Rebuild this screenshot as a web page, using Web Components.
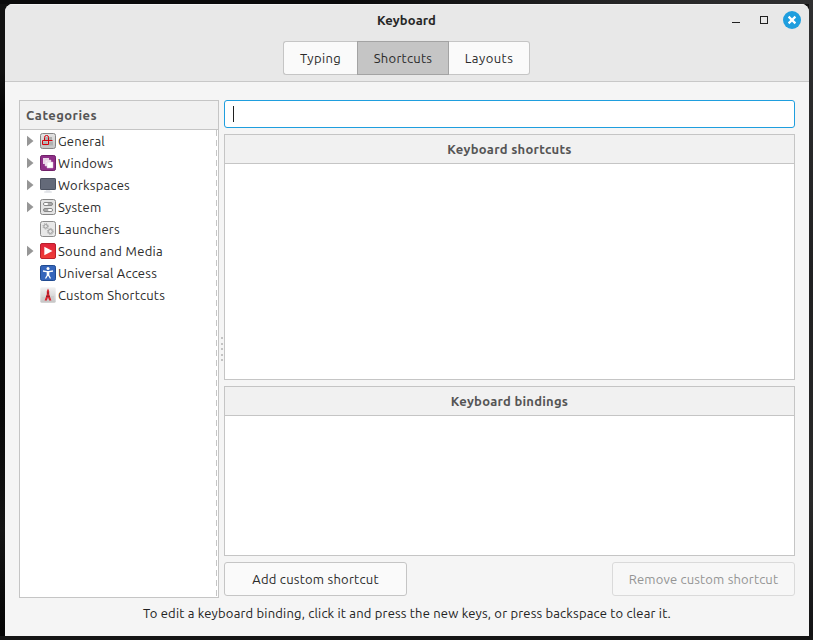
<!DOCTYPE html>
<html lang="en">
<head>
<meta charset="utf-8">
<title>Keyboard</title>
<style>
html{height:100%}
body{margin:0;height:640px;overflow:hidden;box-sizing:border-box;padding:4px 4px 4px 5px;
font:13px/18px Ubuntu,"Noto Sans","Open Sans",sans-serif;color:#2b2b2b;
background:
linear-gradient(#0000 0 4px,#0000 4px 636px,#151515 636px),
linear-gradient(90deg,#0a0a0b 0 340px,#252526 620px,#303031 813px) 0 0/100% 4px no-repeat,
linear-gradient(#111 0 70px,#030303 110px,#090909 420px,#151515 530px,#030303) 0 0/5px 100% no-repeat,
linear-gradient(#303031,#202021 280px,#292929 500px,#121213) 100% 0/4px 100% no-repeat,#111}
</style>
</head>
<body>
<keyboard-window></keyboard-window>
<script>
const define = (name, html, init) => customElements.define(name, class extends HTMLElement {
  constructor(){ super(); this.attachShadow({mode:'open'}).innerHTML = html; }
  connectedCallback(){ if(init) init(this); }
});

// A text run whose tracking is adjusted to its nominal width.
define('text-run', `<style>:host{display:inline-block;white-space:nowrap}span{display:inline-block}</style><span></span>`, el => {
  const span = el.shadowRoot.querySelector('span');
  const text = el.getAttribute('text'), width = +el.getAttribute('width');
  span.textContent = text;
  const natural = span.getBoundingClientRect().width;
  if(natural) span.style.letterSpacing = (width - natural) / text.length + 'px';
});

define('title-bar', `<style>
:host{display:grid;grid-template-columns:1fr auto 1fr;height:32px;align-items:center;font-weight:600;color:#262626;letter-spacing:0}
text-run{grid-column:2;padding-right:1px}
.controls{justify-self:end;display:flex;padding-right:4px;align-items:center}
svg{display:block}
</style><text-run text="Keyboard" width="59"></text-run>
<div class="controls"><svg width="78" height="20" viewBox="0 0 78 20">
<path d="M5 12.5h8" stroke="#202020" fill="none"/><rect x="33.5" y="6.5" width="7" height="7" stroke="#202020" fill="none"/>
<circle cx="65" cy="10" r="9" fill="#1f9ede"/><path d="M61.6 6.6l6.8 6.8M68.4 6.6l-6.8 6.8" stroke="#fff" stroke-width="2.2"/></svg></div>`);

define('tab-button', `<style>
:host{display:flex;align-items:center;justify-content:center;box-sizing:border-box;height:34px;background:#fafafa;border:1px solid #c5c5c5;color:#2b2b2b}
:host([first]){width:74px;border-right:0;border-radius:3px 0 0 3px}
:host([active]){width:92px;background:#c5c5c5;border-color:#a3a3a3}
:host([last]){width:81px;border-left:0;border-radius:0 3px 3px 0}
</style><slot></slot>`);

define('push-button', `<style>
:host{display:flex;align-items:center;justify-content:center;box-sizing:border-box;width:183px;height:34px;background:#fafafa;border:1px solid #c5c5c5;border-radius:3px;color:#2b2b2b}
:host([disabled]){background:#f7f7f7;border-color:#dadada;color:#949494}
</style><slot></slot>`);

define('list-panel', `<style>
:host{display:flex;flex-direction:column;box-sizing:border-box;border:1px solid #c5c5c5;background:#fff}
header{box-sizing:border-box;height:29px;flex:none;display:flex;align-items:center;justify-content:center;background:#f1f1f1;border-bottom:1px solid #c5c5c5;font-weight:700;color:#555}
:host([side]) header{justify-content:flex-start;padding-left:6px}
.body{flex:1;min-height:0}
:host([side]) .body{margin-right:1px;background:repeating-linear-gradient(#c5c5c5 0 6px,#fff 6px 10px) 100% 0/1px 100% no-repeat}
</style><header><slot name="heading"></slot></header><div class="body"><slot></slot></div>`);

const icons = {
general:`<defs><linearGradient id="g" x2="0" y2="1"><stop stop-color="#e4e4e4"/><stop offset="1" stop-color="#c4c4c4"/></linearGradient></defs><rect x=".5" y=".5" width="15" height="15" rx="2" fill="url(#g)" stroke="#858585"/><path d="M5 4h7v4H5zM3 8.5h4.5v4H3zM8.5 8.5H13v4H8.5z" fill="#b0b0b0"/><path d="M4.5 7.5V4.5q0-2 2-2H7q1.5 0 1.5 2v3M2.5 7.5H12.5M2.5 7.5v4h6v-4" fill="none" stroke="#d4000c"/>`,
windows:`<rect x=".5" y=".5" width="15" height="15" rx="1.7" fill="#8f2f88" stroke="#702069"/><path d="M3 3h6v6H3z" fill="#ead7e8"/><path d="M5 5h6v6H5z" fill="#f5eaf4" stroke="#d9b8d6" stroke-width=".5"/><path d="M7 7h6v6H7z" fill="#fff" stroke="#d9b8d6" stroke-width=".5"/>`,
workspaces:`<path d="M6 13h4l1 2.5H5z" fill="#e6e8ec"/><path d="M4 15h8" stroke="#dadde2"/><rect x=".5" y="1.5" width="15" height="11" rx=".6" fill="#646a79" stroke="#4c5260"/>`,
system:`<rect x=".5" y=".5" width="15" height="15" rx="2" fill="#e4e4e4" stroke="#858585"/><rect x="3.5" y="3.5" width="9" height="3" rx="1.5" fill="#aaa" stroke="#888"/><rect x="3.5" y="9.5" width="9" height="3" rx="1.5" fill="#aaa" stroke="#888"/><rect x="4" y="4" width="4" height="2" rx="1" fill="#fff"/><rect x="8" y="10" width="4" height="2" rx="1" fill="#fff"/>`,
launchers:`<rect x=".5" y=".5" width="15" height="15" rx="2" fill="#e8e8e8" stroke="#8c8c8c"/><g fill="none" stroke="#999"><circle cx="5.7" cy="5.3" r="1.8"/><circle cx="5.7" cy="5.3" r="2.7" stroke-dasharray="1 1.1"/><circle cx="10.4" cy="10.4" r="2"/><circle cx="10.4" cy="10.4" r="3" stroke-dasharray="1.1 1.2"/></g>`,
media:`<defs><linearGradient id="r" x2="0" y2="1"><stop stop-color="#e0243c"/><stop offset="1" stop-color="#f03d35"/></linearGradient></defs><rect x=".5" y=".5" width="15" height="15" rx="1.5" fill="url(#r)" stroke="#b9202c"/><path d="M4.3 3.8 12.5 8l-8.2 4.2z" fill="#fff"/>`,
access:`<rect x=".5" y=".5" width="15" height="15" rx="1.7" fill="#3565bb" stroke="#204b91"/><circle cx="8" cy="3.5" r="1.5" fill="#fff"/><path d="M3 6l3.8.7h2.4L13 6M7.5 7v3l-2 3.5M8.5 7v3l2 3.5" fill="none" stroke="#fff" stroke-width="1.3"/><path d="M6.8 6.5h2.4V10H6.8z" fill="#fff"/>`,
custom:`<defs><linearGradient id="c" x2="0" y2="1"><stop stop-color="#f2f2f2"/><stop offset="1" stop-color="#c4c4c4"/></linearGradient></defs><rect x=".3" y=".3" width="15.4" height="15.4" rx="1.5" fill="url(#c)"/><path d="M2 10h3v3H2zM11 9h3v4h-3z" fill="#ccc"/><path d="M8 1.5l1.2 2.7v3l2.2 6.3H9.2L8 10.2l-1.2 3.3H4.6l2.2-6.3v-3z" fill="#d9202c"/><path d="M7 6h2M6 9.3h4" stroke="#862029"/>`
};

define('category-row', `<style>
:host{display:grid;grid-template-columns:20px 18px auto;height:22px;align-items:center;justify-content:start;box-sizing:border-box}
svg{display:block}.arrow{margin-left:7px}
:host(:not([expandable])) .arrow{visibility:hidden}
</style><svg class="arrow" width="7" height="12" viewBox="0 0 7 12"><path d="M0 .7 6.5 6 0 11.3z" fill="#969696"/></svg><svg class="icon" width="16" height="16" viewBox="0 0 16 16"></svg><slot></slot>`,
 el => el.shadowRoot.querySelector('.icon').innerHTML = icons[el.getAttribute('icon')]);

define('search-field', `<style>
:host{display:flex;align-items:center;box-sizing:border-box;height:28px;padding-left:8px;background:#fff;border:1px solid #1f9ede;border-radius:3px}
i{width:1px;height:16px;background:#202020}
</style><i></i>`);

define('pane-handle', `<style>
:host{display:flex;flex-direction:column;align-items:center;justify-content:center;gap:3.5px;width:5px}
i{width:2px;height:2px;background:#b2b2b2;border-radius:1px}
</style><i></i><i></i><i></i><i></i><i></i>`);

define('keyboard-window', `<style>
:host{display:flex;flex-direction:column;height:632px;background:#f5f5f5;border-radius:8px 8px 0 0;overflow:hidden}
.head{box-sizing:border-box;height:78px;background:#e8e8e8;border-bottom:1px solid #c8c8c8;box-shadow:inset 0 1px #f3f3f3}
nav{display:flex;justify-content:center;padding:5px 1px 0 0}
main{display:flex;padding:18px 14px 0}
.side{width:200px;height:498px}
.right{flex:1;display:flex;flex-direction:column;gap:6px}
.one{height:246px}.two{height:170px}
.actions{display:flex;justify-content:space-between}
footer{display:flex;justify-content:center;padding-top:6px;color:#222}
</style>
<div class="head"><title-bar></title-bar><nav>
<tab-button first><text-run text="Typing" width="41"></text-run></tab-button>
<tab-button active><text-run text="Shortcuts" width="58.5"></text-run></tab-button>
<tab-button last><text-run text="Layouts" width="48.5"></text-run></tab-button></nav></div>
<main><list-panel side class="side"><text-run slot="heading" text="Categories" width="71"></text-run>
<category-row icon="general" expandable><text-run text="General" width="47"></text-run></category-row>
<category-row icon="windows" expandable><text-run text="Windows" width="55"></text-run></category-row>
<category-row icon="workspaces" expandable><text-run text="Workspaces" width="72"></text-run></category-row>
<category-row icon="system" expandable><text-run text="System" width="43.5"></text-run></category-row>
<category-row icon="launchers"><text-run text="Launchers" width="62"></text-run></category-row>
<category-row icon="media" expandable><text-run text="Sound and Media" width="105"></text-run></category-row>
<category-row icon="access"><text-run text="Universal Access" width="99"></text-run></category-row>
<category-row icon="custom"><text-run text="Custom Shortcuts" width="107"></text-run></category-row>
</list-panel><pane-handle></pane-handle>
<div class="right"><search-field></search-field>
<list-panel class="one"><text-run slot="heading" text="Keyboard shortcuts" width="124.5"></text-run></list-panel>
<list-panel class="two"><text-run slot="heading" text="Keyboard bindings" width="117.5"></text-run></list-panel>
<div class="actions"><push-button><text-run text="Add custom shortcut" width="126.5"></text-run></push-button>
<push-button disabled><text-run text="Remove custom shortcut" width="149.5"></text-run></push-button></div></div></main>
<footer><text-run text="To edit a keyboard binding, click it and press the new keys, or press backspace to clear it." width="528"></text-run></footer>`);
</script>
</body>
</html>
